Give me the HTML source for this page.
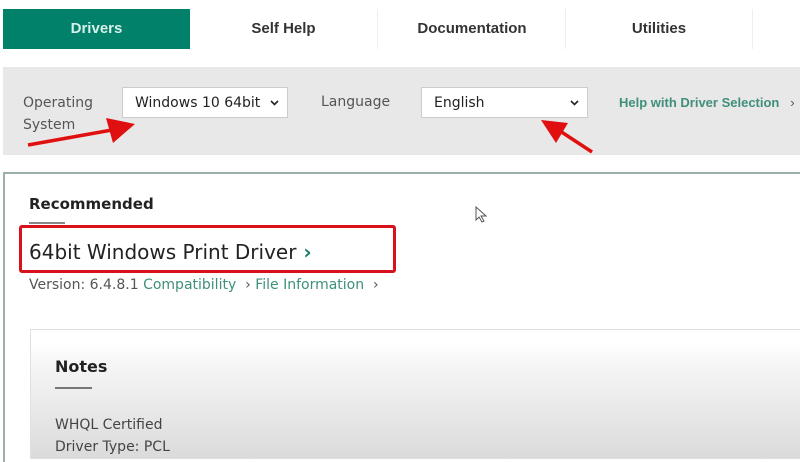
<!DOCTYPE html>
<html><head><meta charset="utf-8">
<style>
*{margin:0;padding:0;box-sizing:border-box}
body{width:800px;height:450px;overflow:hidden;background:#fff;font-family:"DejaVu Sans","Liberation Sans",sans-serif;position:relative}
.abs{position:absolute}
.tab{position:absolute;top:9px;height:40px;line-height:40px;text-align:center;font-size:15px;color:#333;font-weight:bold;font-family:"Liberation Sans",sans-serif}
.sel{position:absolute;background:#fff;border:1px solid #ccc;height:31px;font-size:14px;color:#222;line-height:31px;padding-left:12px}
.chev{position:absolute;right:8px;top:12px}
</style></head><body>
<div class="tab" style="left:3px;width:187px;background:#01806a;color:#d8f0ea">Drivers</div>
<div class="tab" style="left:190px;width:187px">Self Help</div>
<div class="abs" style="left:377px;top:9px;width:1px;height:40px;background:#eee"></div>
<div class="tab" style="left:378px;width:188px">Documentation</div>
<div class="abs" style="left:565px;top:9px;width:1px;height:40px;background:#eee"></div>
<div class="tab" style="left:566px;width:186px">Utilities</div>
<div class="abs" style="left:752px;top:9px;width:1px;height:40px;background:#eee"></div>

<div class="abs" style="left:3px;top:67px;width:797px;height:88px;background:#e8e8e8"></div>
<div class="abs" style="left:23px;top:92px;font-size:14px;color:#555;line-height:22px">Operating<br>System</div>
<div class="sel" style="left:122px;top:87px;width:166px">Windows 10 64bit<svg class="chev" width="9" height="6"><path d="M1 1 L4.5 4.5 L8 1" stroke="#222" stroke-width="1.6" fill="none"/></svg></div>
<div class="abs" style="left:321px;top:94px;font-size:14px;color:#555">Language</div>
<div class="sel" style="left:421px;top:87px;width:167px">English<svg class="chev" width="9" height="6"><path d="M1 1 L4.5 4.5 L8 1" stroke="#222" stroke-width="1.6" fill="none"/></svg></div>
<div class="abs" style="left:619px;top:95px;font-size:13px;color:#3f8f7a;font-weight:bold;white-space:nowrap;font-family:'Liberation Sans',sans-serif">Help with Driver Selection&nbsp;&nbsp;&nbsp;<span style="color:#555;font-weight:normal">›</span></div>

<svg class="abs" style="left:0;top:0" width="800" height="160">
<path d="M28 145 L112 130" stroke="#e01010" stroke-width="3.5" fill="none"/>
<polygon points="135,124 106,118 113,143" fill="#e01010"/>
<path d="M592 152 L560 131" stroke="#e01010" stroke-width="3.5" fill="none"/>
<polygon points="541,120 568,123 556,143" fill="#e01010"/>
</svg>

<div class="abs" style="left:3px;top:172px;width:800px;height:290px;border:2px solid #9ab0a8;border-right:none;border-bottom:none"></div>
<div class="abs" style="left:29px;top:195px;font-size:15px;font-weight:bold;color:#222">Recommended</div>
<div class="abs" style="left:29px;top:222px;width:36px;height:2px;background:#888"></div>
<div class="abs" style="left:19px;top:225px;width:377px;height:48px;border:3px solid #d9111b;border-radius:3px"></div>
<div class="abs" style="left:29px;top:240px;font-size:20px;color:#222">64bit Windows Print Driver<span style="color:#1a7a68;font-weight:bold"> ›</span></div>
<div class="abs" style="left:29px;top:277px;font-size:14px;color:#555">Version: 6.4.8.1 <span style="color:#3f8f7a">Compatibility</span>&nbsp;&nbsp;<span>›</span> <span style="color:#3f8f7a">File Information</span>&nbsp;&nbsp;<span>›</span></div>

<div class="abs" style="left:30px;top:329px;width:780px;height:130px;border:1px solid #e0e0e0;background:linear-gradient(#fff 0,#fff 12px,#f4f4f4 40px,#e0e0e0 110px,#dadada 130px)"></div>
<div class="abs" style="left:55px;top:357px;font-size:16px;font-weight:bold;color:#222">Notes</div>
<div class="abs" style="left:55px;top:387px;width:37px;height:2px;background:#777"></div>
<div class="abs" style="left:55px;top:414px;font-size:14px;color:#444;line-height:22px">WHQL Certified<br>Driver Type: PCL</div>

<svg class="abs" style="left:475px;top:206px" width="14" height="18"><path d="M1 1 L1 14 L4 11 L7 16 L9 15 L6 10 L11 10 Z" fill="#fff" stroke="#555" stroke-width="1"/></svg>
</body></html>
